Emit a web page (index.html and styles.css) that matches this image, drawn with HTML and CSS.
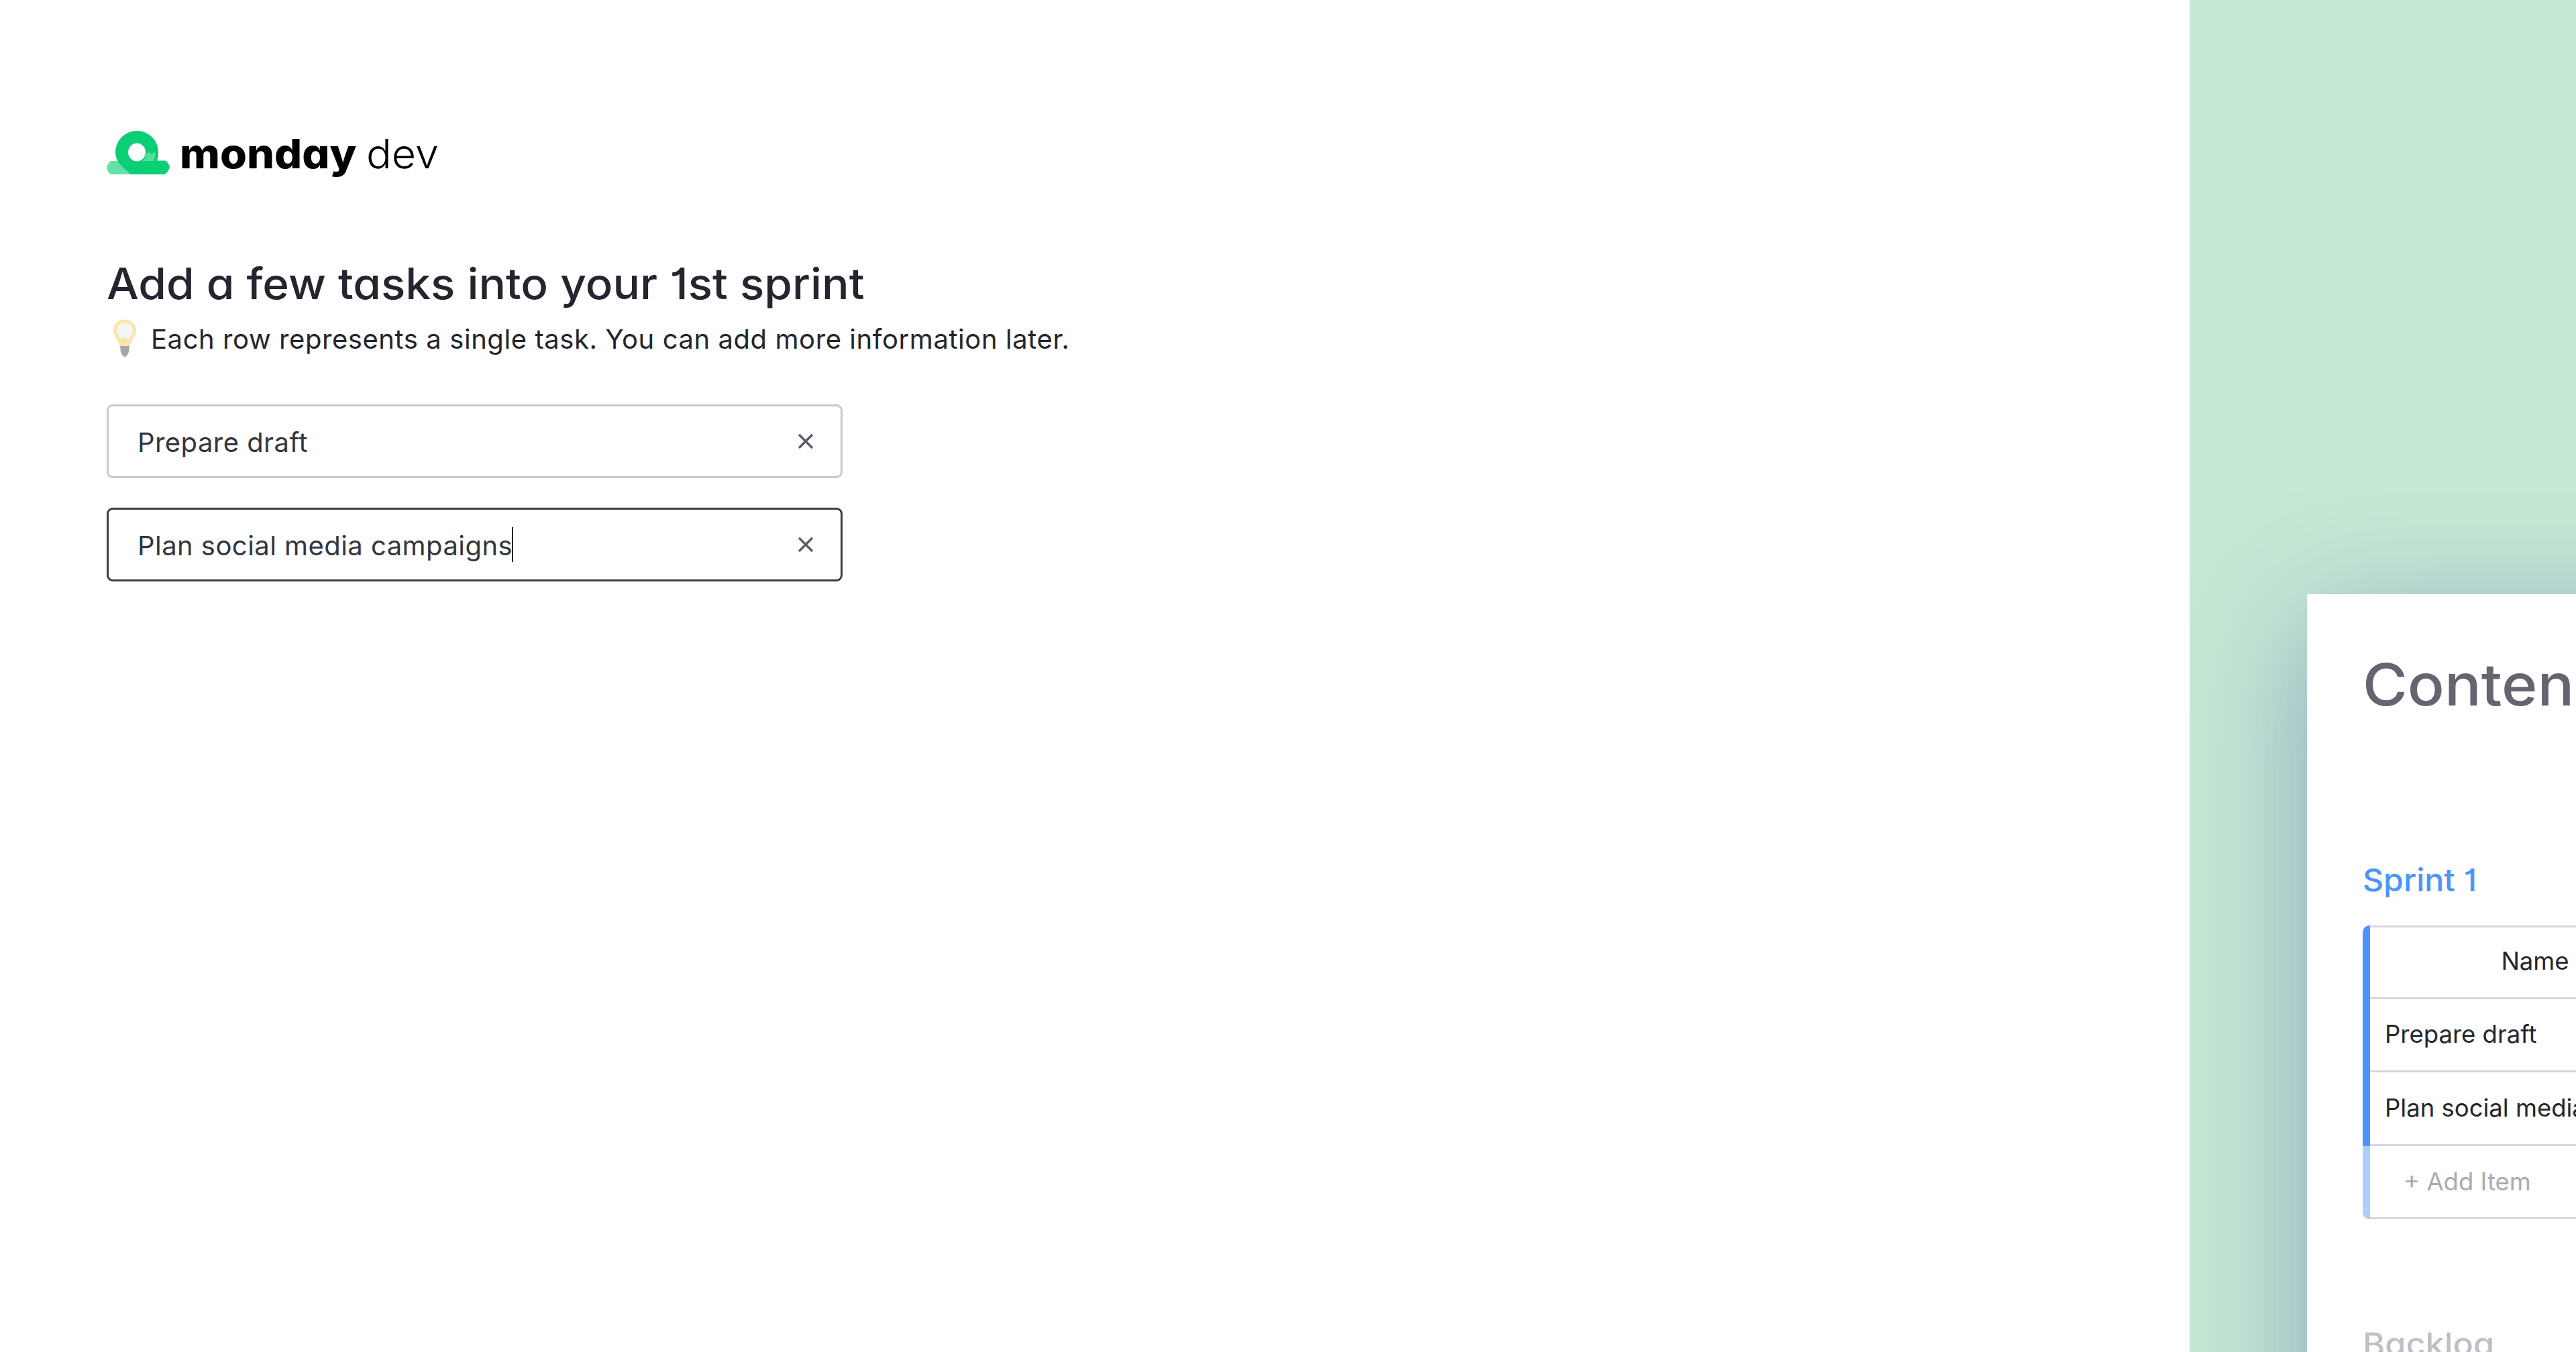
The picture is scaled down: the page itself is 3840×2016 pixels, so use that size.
FILE: index.html
```html
<html>
<head>
	<meta charset="utf-8">
	<title>monday dev</title>
	<link rel="stylesheet" href="styles.css">
</head>
<body>

	<main class="setup">
		<div class="logo">
			<svg class="logo-mark" viewBox="0 0 94 65">
				<path fill="#67e0a7" d="M6 45h14l16 20H6Q1 62 0 54q3-7 6-9z"/>
				<path fill="#0bcf75" fill-rule="evenodd" d="M45 0a32 32 0 0 1 32 32c0 5-.5 9-2 12.500h13q4 3 6 9.500-2 7-7 11H36C27 57 13 48 13 32A32 32 0 0 1 45 0zM45 18.500a13 13.500 0 1 0 0 27 13 13.500 0 1 0 0-27z"/>
				<path fill="#55dc9c" d="M59 35l4-3 4 3 3-3 3 1-3 12H53q5-4 6-10z"/>
			</svg>
			<span class="logo-name">monday</span>
			<span class="logo-product">dev</span>
		</div>

		<h1>Add a few tasks into your 1st sprint</h1>
		<p class="hint">
			<svg class="bulb" viewBox="0 0 34 56">
				<path fill="#f4f4f5" stroke="#fae6a8" stroke-width="5" d="M17 3C8 3 2.500 9 2.500 17c0 8 7.500 12 9 22h11c1.500-10 9-14 9-22C31.500 9 26 3 17 3z"/>
				<path fill="#fae6a8" d="M12 28h10v13H12z"/>
				<path fill="#a5a6aa" d="M10 40h14l-1 9q-3 7-6 7t-6-7z"/>
			</svg>
			<span>Each row represents a single task. You can add more information later.</span>
		</p>

		<div class="tasks">
			<div class="task">
				<span>Prepare draft</span>
				<svg class="remove" viewBox="0 0 22 22"><path d="M1 1l20 20M21 1L1 21"/></svg>
			</div>
			<div class="task focused">
				<span>Plan social media campaigns</span><i class="caret"></i>
				<svg class="remove" viewBox="0 0 22 22"><path d="M1 1l20 20M21 1L1 21"/></svg>
			</div>
		</div>
	</main>

	<aside class="preview">
		<div class="board">
			<h2>Conten</h2>
			<h3 class="sprint">Sprint 1</h3>
			<div class="table">
				<div class="row head">Name</div>
				<div class="row">Prepare draft</div>
				<div class="row">Plan social media</div>
				<div class="row add">+ Add Item</div>
			</div>
			<h3 class="backlog">Backlog</h3>
		</div>
	</aside>

</body>
</html>
```
FILE: styles.css
```css
* {
	margin: 0;
	padding: 0;
	box-sizing: border-box;
}
body {
	display: flex;
	height: 100vh;
	overflow: hidden;
	background: white;
	color: #24252e;
	font-family: Inter, sans-serif;
}

h1,
h2,
h3 {
	font-weight: 500;
	font-feature-settings: "cv11", "cv01";
	white-space: nowrap;
	transform-origin: left;
}

/* left side */
.setup {
	width: 3264px;
	flex: none;
	padding: 195px 159px 0;
}

.logo {
	display: flex;
	height: 65px;
	color: black;
	font-size: 61px;
	line-height: 64px;
	font-feature-settings: "cv11";
}
.logo-mark {
	width: 94px;
	height: 65px;
	margin-right: 15px;
}
.logo-name {
	padding-top: 2px;
	font-weight: 800;
	transform: scaleX(1.06);
	transform-origin: left;
}
.logo-product {
	padding-top: 2px;
	margin-left: 29px;
	font-weight: 300;
	transform: scaleX(1.03);
	transform-origin: left;
}

h1 {
	margin-top: 123px;
	font-size: 64px;
	line-height: 80px;
	transform: scaleX(1.055);
}

.hint {
	display: flex;
	height: 60px;
	margin: 13px 0 67px;
	font-size: 40px;
	line-height: 60px;
	letter-spacing: .57px;
	white-space: nowrap;
}
.bulb {
	width: 34px;
	height: 56px;
	margin: 0 22px 0 10px;
}

.tasks {
	display: flex;
	flex-direction: column;
	gap: 44px;
}
.task {
	display: flex;
	align-items: center;
	width: 1097px;
	height: 110px;
	padding: 0 41px 0 43px;
	border: 3px solid #c6c8d4;
	border-radius: 9px;
	color: #34353f;
	font-size: 40px;
	letter-spacing: .45px;
}
.task span {
	padding-top: 3px;
}
.focused {
	border-color: #3b3b45;
}
.caret {
	width: 2px;
	height: 52px;
	margin-left: -1px;
	background: #24252e;
}
.remove {
	width: 22px;
	height: 22px;
	margin-left: auto;
	fill: none;
	stroke: #5c5d68;
	stroke-width: 3.5;
}

/* right side */
.preview {
	flex: 1;
	min-width: 0;
	padding: 886px 0 0 175px;
	overflow: hidden;
	background: #c6e9d5;
}
.board {
	width: 1400px;
	height: 1600px;
	padding: 85px 83px;
	background: white;
	box-shadow: 0 45px 180px rgba(63, 68, 153, .42);
}

h2 {
	color: #65656f;
	font-size: 86px;
	line-height: 100px;
	transform: scaleX(1.06);
}
h3 {
	font-size: 47px;
	line-height: 60px;
}
.sprint {
	margin: 211px 0 38px;
	color: #4a95fc;
	transform: scaleX(1.025);
}
.backlog {
	margin-top: 156px;
	color: #bfc0c6;
	transform: scaleX(1.075);
}

.table {
	width: 503px;
	height: 438px;
	display: grid;
	grid-template-rows: repeat(4, 1fr);
	border-radius: 10px 0 0 10px;
	overflow: hidden;
}
.row {
	display: flex;
	align-items: center;
	padding: 0 0 4px 22px;
	border-left: 11px solid #4a95fc;
	box-shadow: inset 0 -3px #d6d7df;
	font-size: 36.5px;
	white-space: nowrap;
}
.head {
	justify-content: center;
	padding: 0 0 4px;
	box-shadow: inset 0 -3px #d6d7df, inset 0 3px #d6d7df;
}
.add {
	padding: 0 0 3px 50px;
	border-left-color: #accffe;
	color: #a9aab2;
}
```
